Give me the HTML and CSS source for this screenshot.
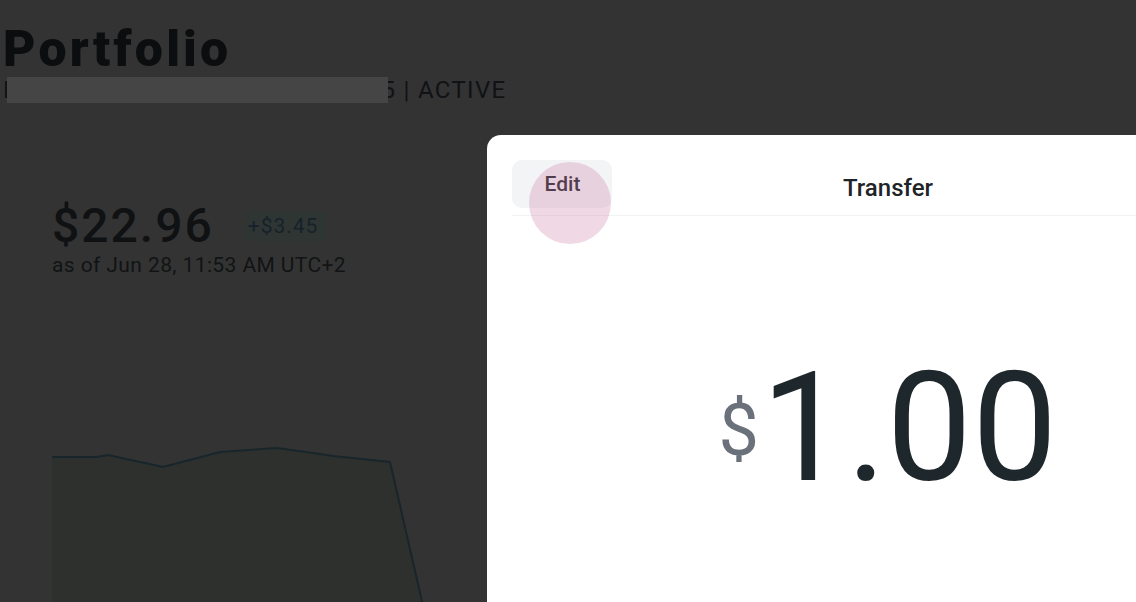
FILE: index.html
```html
<!DOCTYPE html>
<html>
<head>
<meta charset="utf-8">
<link rel="stylesheet" href="styles.css">
</head>
<body>
<main class="page">
  <h1 class="title">Portfolio</h1>
  <div class="subtitle"><span class="first">F</span><span class="gap"></span>5 | ACTIVE<span class="redact"></span></div>
  <section class="stats">
    <div class="value-row">
      <span class="value">$22.96</span>
      <span class="badge">+$3.45</span>
    </div>
    <div class="asof">as of Jun 28, 11:53 AM UTC+2</div>
  </section>
  <svg class="chart" width="500" height="180" viewBox="0 0 500 180">
    <polygon class="area" points="0,27 45,27 56,25 111,37 168,22 225,18 261,23 281,26 338,32 372,180 0,180"/>
    <polyline class="line" points="0,27 45,27 56,25 111,37 168,22 225,18 261,23 281,26 338,32 372,180"/>
  </svg>
</main>
<div class="modal">
  <header class="modal-head">
    <button class="edit">Edit</button>
    <div class="modal-title">Transfer</div>
    <div></div>
  </header>
  <span class="touch"></span>
  <div class="amount">
    <span class="currency">$</span>
    <span class="digits">1.00</span>
  </div>
</div>
</body>
</html>
```

FILE: styles.css
```css
html, body {
  margin: 0;
  padding: 0;
  height: 100%;
  overflow: hidden;
}
body {
  background: #333333;
  font-family: Roboto, "Noto Sans", sans-serif;
  color: #0d0e10;
  position: relative;
}
.page {
  padding: 24px 0 0 3px;
}
.title {
  margin: 0;
  font-size: 50px;
  line-height: 50px;
  font-weight: 900;
  letter-spacing: 3.2px;
  color: #0c0d0f;
}
.subtitle {
  position: relative;
  margin-top: 2px;
  font-size: 24px;
  line-height: 28px;
  letter-spacing: 1.3px;
  color: #101215;
  white-space: nowrap;
}
.gap {
  display: inline-block;
  width: 364px;
}
.redact {
  position: absolute;
  left: 4px;
  top: 1px;
  width: 381px;
  height: 26px;
  background: #454545;
}
.stats {
  padding: 98px 0 0 49px;
}
.value-row {
  display: flex;
  align-items: center;
  gap: 30px;
}
.value {
  font-size: 48px;
  line-height: 48px;
  font-weight: 500;
  letter-spacing: 2px;
  color: #0f1113;
}
.badge {
  height: 30px;
  display: flex;
  align-items: center;
  padding: 0 8px 0 4px;
  font-size: 21px;
  letter-spacing: 1px;
  background: #2f3533;
  color: #16222a;
  border-radius: 3px;
}
.asof {
  margin-top: 3px;
  font-size: 21px;
  line-height: 24px;
  letter-spacing: 0.4px;
  color: #111315;
}
.chart {
  display: block;
  margin: 153px 0 0 49px;
}
.area {
  fill: #2e302d;
}
.line {
  fill: none;
  stroke: #18262c;
  stroke-width: 2;
}
.modal {
  position: absolute;
  left: 487px;
  top: 135px;
  width: 802px;
  height: 520px;
  background: #ffffff;
  border-radius: 14px;
}
.modal-head {
  display: grid;
  grid-template-columns: 1fr auto 1fr;
  align-items: center;
  margin: 0 25px;
  padding: 25px 0 7px;
  border-bottom: 1px solid #f1f2f3;
}
.edit {
  width: 100px;
  height: 48px;
  border: 0;
  border-radius: 10px;
  background: #f3f4f6;
  font-family: Roboto, sans-serif;
  font-size: 21px;
  font-weight: 500;
  color: #1c2026;
  padding: 0 0 0 1px;
}
.modal-title {
  font-size: 24px;
  font-weight: 500;
  color: #1f2428;
  padding-top: 8px;
}
.touch {
  position: absolute;
  left: 42px;
  top: 27px;
  width: 82px;
  height: 82px;
  border-radius: 50%;
  background: rgba(205, 130, 165, 0.3);
}
.amount {
  display: flex;
  justify-content: center;
  align-items: flex-start;
  margin-top: 136px;
}
.currency {
  font-size: 72px;
  line-height: 72px;
  color: #6b717b;
  margin-top: 43px;
  margin-right: 2px;
}
.digits {
  font-size: 152px;
  line-height: 152px;
  color: #1e272c;
}
```
